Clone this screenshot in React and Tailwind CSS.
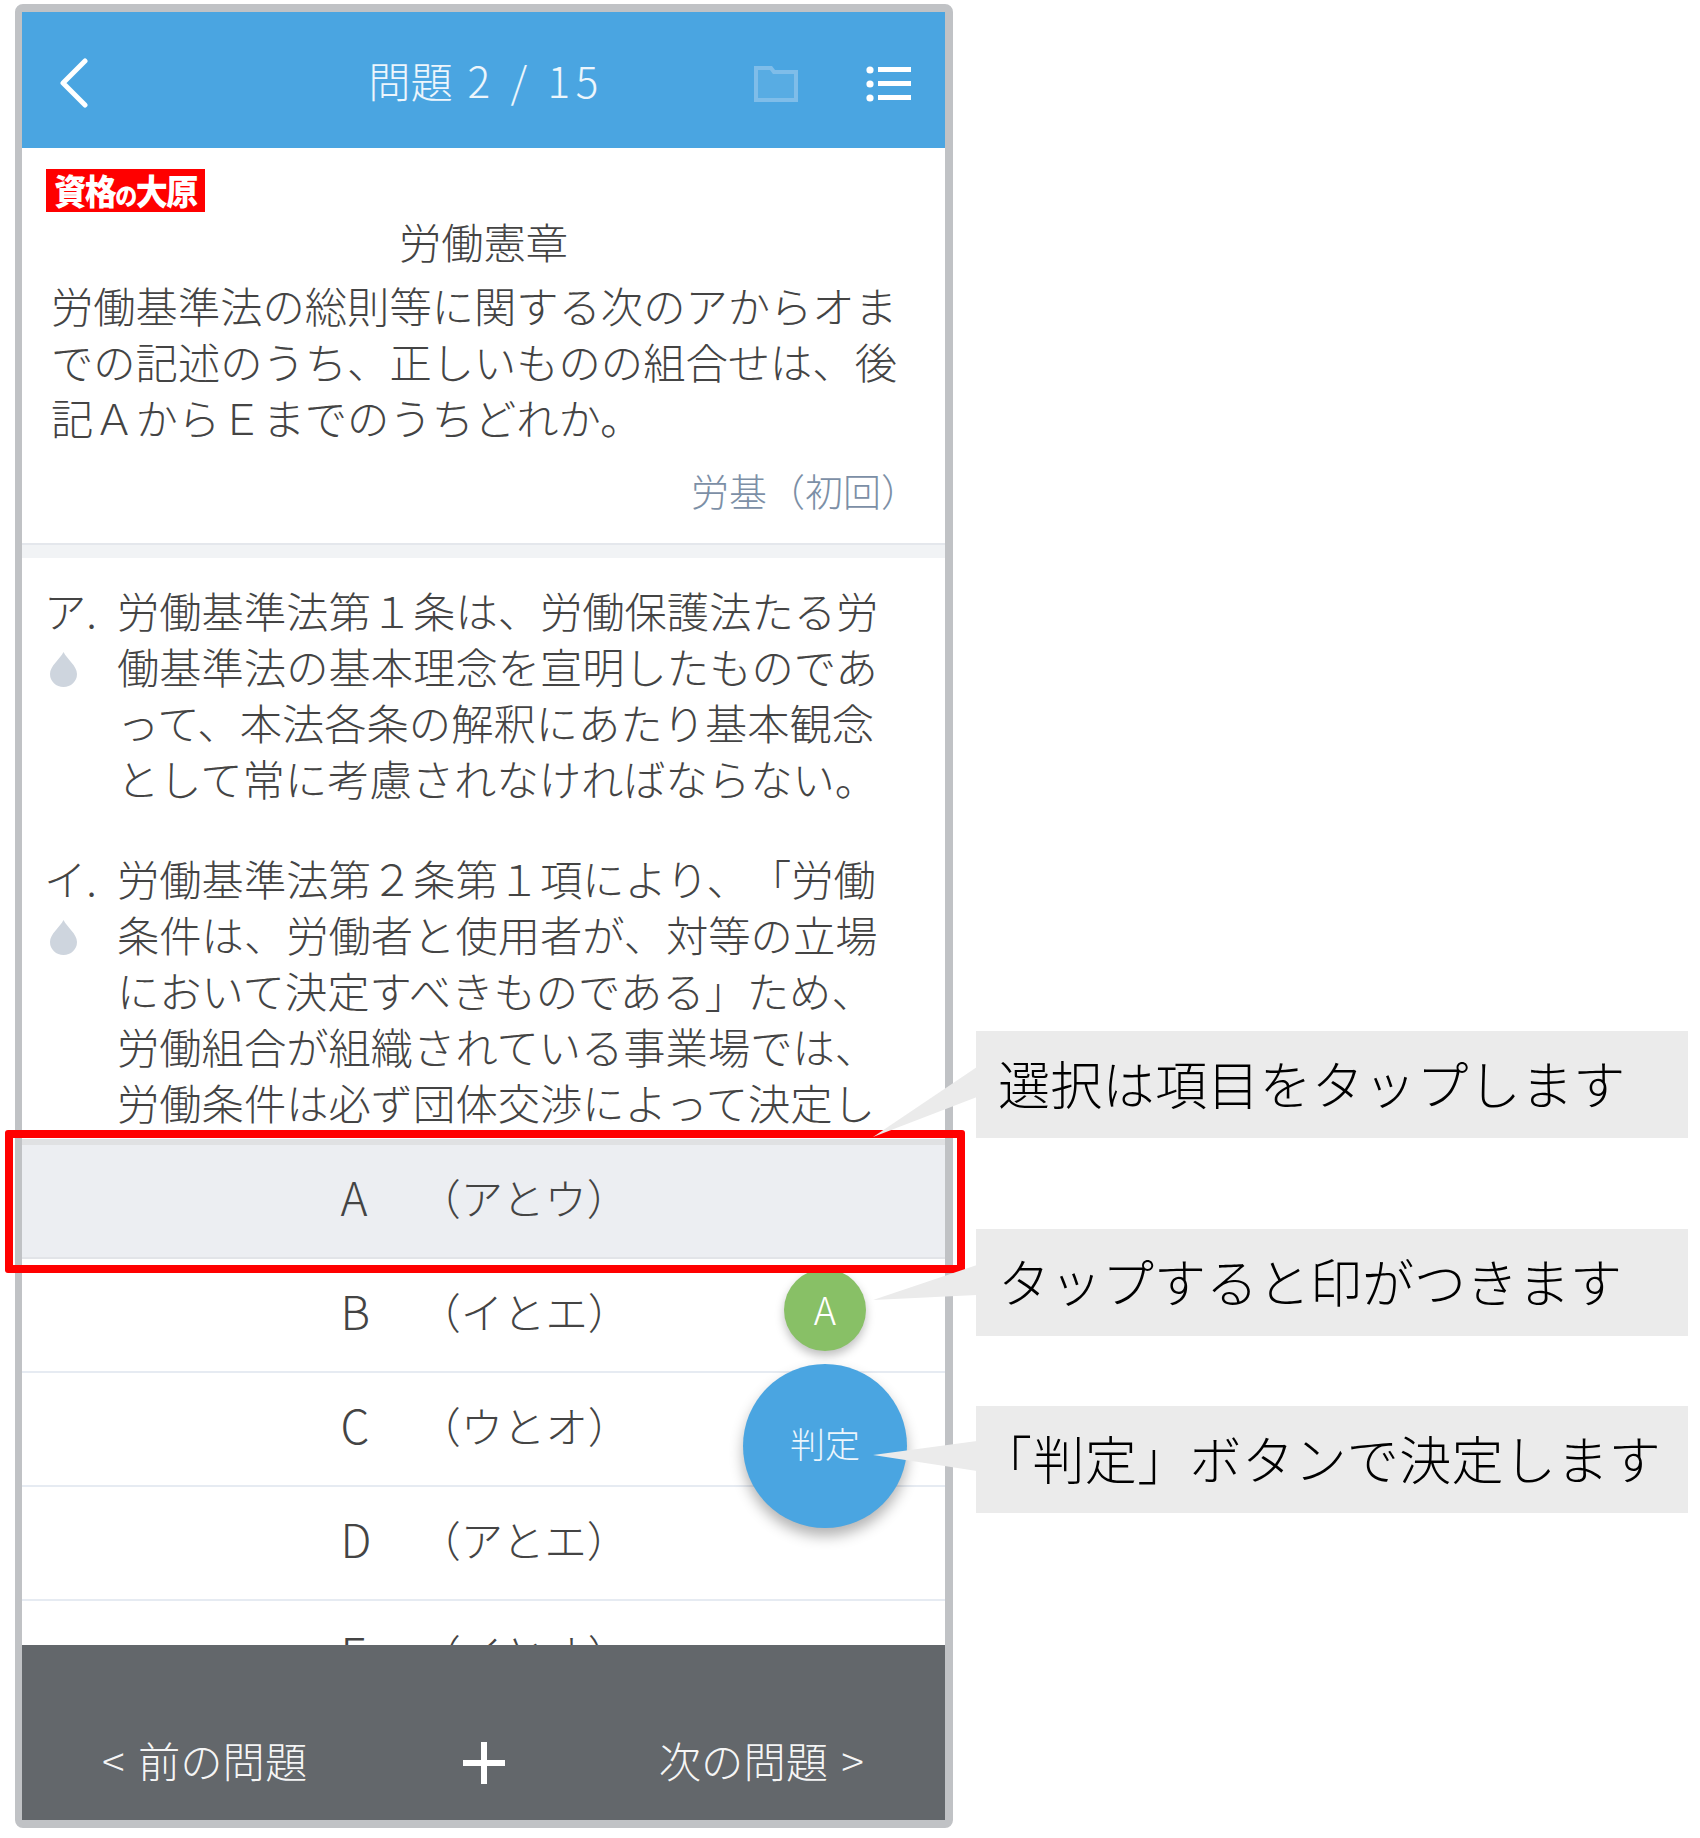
const jp = "font-['Noto_Sans_CJK_JP','Noto_Sans',sans-serif]";

function Header() {
  return (
    <header className="relative h-[136px] shrink-0 bg-[#4aa5e1] flex items-center justify-center">
      <svg className="absolute left-[37px] top-[46px]" width="30" height="50" viewBox="0 0 30 50" fill="none">
        <path d="M26 3 L4 25 L26 47" stroke="#fff" strokeWidth="5" strokeLinecap="round" strokeLinejoin="round" />
      </svg>
      <div className="text-[42.3px] leading-[56px] font-light text-white/90 whitespace-nowrap pb-[1px] pl-[5px]">
        問題<span className="tracking-[5.5px]"> 2 / 15</span>
      </div>
      <svg className="absolute left-[732px] top-[54px]" width="44" height="36" viewBox="0 0 44 36" fill="none">
        <path d="M2 34 V2 H17 L20 6 H42 V34 Z" fill="#58ace3" stroke="#7fbde9" strokeWidth="4" />
      </svg>
      <svg className="absolute left-[844px] top-[54px]" width="46" height="36" viewBox="0 0 46 36" fill="#fff">
        <circle cx="4" cy="4" r="3.6" />
        <circle cx="4" cy="18" r="3.6" />
        <circle cx="4" cy="32" r="3.6" />
        <rect x="12" y="1" width="33" height="5" />
        <rect x="12" y="15" width="33" height="5" />
        <rect x="12" y="29" width="33" height="5" />
      </svg>
    </header>
  );
}

function Drop() {
  return (
    <svg width="27" height="35" viewBox="0 0 27 35" className="ml-[6px] mt-[14px]">
      <path d="M13.5 0 C17 7 27 14 27 22 A13.5 13 0 0 1 0 22 C0 14 10 7 13.5 0 Z" fill="#ced5de" />
    </svg>
  );
}

function Item({ mark, lines, className }) {
  return (
    <div className={"flex text-[42.3px] leading-[56px] font-light text-[#444] " + className}>
      <div className="w-[73px] shrink-0 flex flex-col">
        <div className="whitespace-nowrap h-[56px]">{mark}.</div>
        <Drop />
      </div>
      <div className="whitespace-nowrap">
        {lines.map((l) => (
          <div key={l}>{l}</div>
        ))}
      </div>
    </div>
  );
}

function Option({ label, text, selected }) {
  return (
    <div
      className={
        "h-[114px] shrink-0 flex items-center justify-center border-b-2 font-light text-[#444] pb-[9px] pl-[4px] " +
        (selected ? "bg-[#eceef2] border-[#e2e4e8]" : "bg-white border-[#e6ebf2]")
      }
    >
      <span className="w-[78px] text-[46px]">{label}</span>
      <span className="w-[212px] text-[42.3px] whitespace-nowrap">{text}</span>
    </div>
  );
}

function Phone() {
  return (
    <div className="w-[938px] h-[1824px] shrink-0 flex flex-col overflow-hidden rounded-[8px] border-y-[8px] border-l-[7px] border-r-[8px] border-[#c0c2c5] bg-white">
      <Header />
      <main className="flex-1 min-h-0 overflow-hidden relative">
        <section className="h-[397px] border-b-2 border-[#e4e7ec]">
          <div className="ml-[24px] pt-[21px]">
            <div className="w-[159px] h-[43px] bg-[#ff0000] text-white font-black text-[32px] leading-[42px] text-center whitespace-nowrap tracking-[-1.5px]">
              <span className="inline-block scale-y-110">
                資格<span className="text-[22px]">の</span>大原
              </span>
            </div>
          </div>
          <div className="text-center text-[42.3px] leading-[56px] font-light text-[#444] mt-[1px]">労働憲章</div>
          <div className="pl-[29px] text-[42.3px] leading-[56px] font-light text-[#444] whitespace-nowrap mt-[8px]">
            <div>労働基準法の総則等に関する次のアからオま</div>
            <div>での記述のうち、正しいものの組合せは、後</div>
            <div>記ＡからＥまでのうちどれか。</div>
          </div>
          <div className="text-right mt-[17px] mr-[26px] text-[38px] leading-[56px] font-light text-[#7c8fa6]">労基（初回）</div>
        </section>
        <div className="h-[13px] bg-[#f1f3f5]" />
        <div className="pl-[22px]">
          <Item
            className="pt-[24px]"
            mark="ア"
            lines={["労働基準法第１条は、労働保護法たる労", "働基準法の基本理念を宣明したものであ", "って、本法各条の解釈にあたり基本観念", "として常に考慮されなければならない。"]}
          />
          <Item
            className="pt-[44px]"
            mark="イ"
            lines={["労働基準法第２条第１項により、「労働", "条件は、労働者と使用者が、対等の立場", "において決定すべきものである」ため、", "労働組合が組織されている事業場では、", "労働条件は必ず団体交渉によって決定し"]}
          />
        </div>
        <div className="mt-[9px] border-t-[6px] border-[#e0e1e3] flex flex-col">
          <Option selected label="A" text="（アとウ）" />
          <Option label="B" text="（イとエ）" />
          <Option label="C" text="（ウとオ）" />
          <Option label="D" text="（アとエ）" />
          <Option label="E" text="（イとオ）" />
        </div>
      </main>
      <footer className="h-[175px] shrink-0 bg-[#63676b] relative z-10 flex items-end justify-between text-white/95 text-[42.3px] leading-[56px] font-light pb-[32px] pl-[80px] pr-[81px]">
        <div className="whitespace-nowrap"><span className="mr-[4px]">&lt;</span> 前の問題</div>
        <svg width="42" height="42" viewBox="0 0 42 42" fill="#fff" className="mb-[4px] translate-x-[1px]">
          <rect x="0" y="18" width="42" height="6" />
          <rect x="18" y="0" width="6" height="42" />
        </svg>
        <div className="whitespace-nowrap">次の問題 <span className="ml-[4px]">&gt;</span></div>
      </footer>
    </div>
  );
}

function Callout({ children, className }) {
  return (
    <div className={"h-[107px] shrink-0 bg-[#ebebeb] flex items-center whitespace-nowrap text-[52px] font-light text-black pb-[4px] " + className}>
      {children}
    </div>
  );
}

export default function App() {
  return (
    <div className={"relative w-[1700px] h-[1838px] bg-white overflow-hidden flex pl-[15px] pt-[4px] [text-spacing-trim:space-all] " + jp}>
      <Phone />
      <div className="ml-[23px] w-[712px] pt-[1027px] flex flex-col">
        <Callout className="pl-[22px] tracking-[0.3px]">選択は項目をタップします</Callout>
        <Callout className="pl-[22px] mt-[91px]">タップすると印がつきます</Callout>
        <Callout className="pl-[4px] mt-[70px] tracking-[0.4px]">「判定」ボタンで決定します</Callout>
      </div>

      <div className="absolute left-[784px] top-[1269px] w-[82px] h-[82px] rounded-full bg-[#88c066] shadow-[0_5px_10px_rgba(0,0,0,0.25)] flex items-center justify-center text-white text-[38px] font-light pb-[4px]">A</div>
      <div className="absolute left-[743px] top-[1364px] w-[164px] h-[164px] rounded-full bg-[#4aa5e1] shadow-[0_8px_14px_rgba(0,0,0,0.3)] flex items-center justify-center text-white/90 text-[35px] font-light pb-[5px]">判定</div>

      <div className="absolute left-[5px] top-[1130px] w-[960px] h-[143px] border-[8px] border-[#ff0000] rounded-[3px]" />

      <svg className="absolute left-0 top-0 pointer-events-none" width="1700" height="1838" viewBox="0 0 1700 1838">
        <polygon points="977,1067 977,1097 873,1137" fill="#ebebeb" />
        <polygon points="977,1265 977,1295 873,1300" fill="#ebebeb" />
        <polygon points="977,1441 977,1471 873,1455" fill="#ebebeb" />
      </svg>
    </div>
  );
}
